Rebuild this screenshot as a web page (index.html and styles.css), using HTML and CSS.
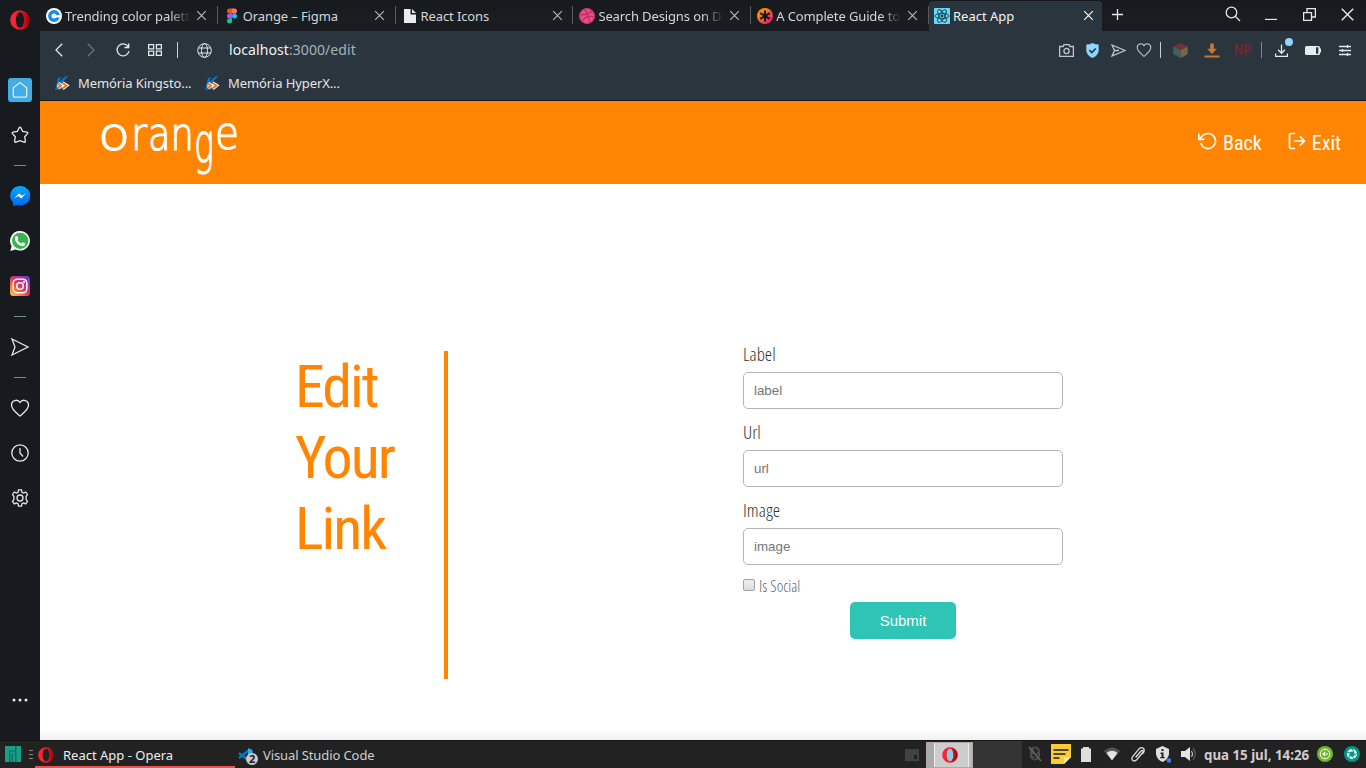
FILE: index.html
```html
<!DOCTYPE html>
<html lang="pt-BR">
<head>
<meta charset="utf-8">
<title>React App</title>
<link rel="stylesheet" href="styles.css">
</head>
<body>
<svg class="defs" width="0" height="0">
  <defs>
    <linearGradient id="operaRed" x1="0" x2="1"><stop offset="0" stop-color="#ff2638"/><stop offset=".5" stop-color="#f01a2b"/><stop offset="1" stop-color="#9c0009"/></linearGradient>
    <linearGradient id="msgBlue" x1="0" y1="0" x2="0" y2="1"><stop offset="0" stop-color="#00aaff"/><stop offset="1" stop-color="#0067ee"/></linearGradient>
    <linearGradient id="insta" x1="0" y1="1" x2=".9" y2="0"><stop offset="0" stop-color="#ffd35a"/><stop offset=".3" stop-color="#f77737"/><stop offset=".55" stop-color="#e1306c"/><stop offset="1" stop-color="#6a3bd0"/></linearGradient>
    <linearGradient id="guide" x1="0" y1="0" x2="1" y2="1"><stop offset=".3" stop-color="#ff8a00"/><stop offset=".75" stop-color="#e52e71"/></linearGradient>
    <symbol id="close" viewBox="0 0 12 12"><path d="M1.3 1.3l9.4 9.4M10.7 1.3l-9.4 9.4"/></symbol>
    <symbol id="send" viewBox="0 0 20 20"><path d="M2 2l16 8-16 8 3-8z"/></symbol>
    <symbol id="heart" viewBox="0 0 20 20"><path d="M10 18C6 14.500 1.500 11.500 1.500 7a4.600 4.600 0 0 1 8.500-2.500A4.600 4.600 0 0 1 18.500 7C18.500 11.500 14 14.500 10 18z"/></symbol>
    <symbol id="opera" viewBox="0 0 20 20"><path fill="url(#operaRed)" fill-rule="evenodd" d="M10 .2a9.800 9.800 0 1 0 0 19.600A9.800 9.800 0 0 0 10 .2zM10 2.300c2.500 0 4.100 3.400 4.100 7.700s-1.600 7.700-4.100 7.700S5.900 14.300 5.900 10 7.500 2.300 10 2.300z"/></symbol>
    <symbol id="kabum" viewBox="0 0 16 16"><path fill="#0877c8" d="M1 15L4 3l3-1-2 5 7-6h2L8 8l5 3-4 3z"/><path d="M4 8.500l3 2-3 2.500M8.500 8l4 2.500-4 3" fill="none" stroke="#fff" stroke-width="3.500"/><path d="M4 8.500l3 2-3 2.500M8.500 8l4 2.500-4 3" fill="none" stroke="#ee6b22" stroke-width="1.700"/></symbol>
  </defs>
</svg>
<div class="desktop">
  <div class="browser">
    <aside class="sidebar">
      <div class="side-logo"><svg width="20" height="20"><use href="#opera"/></svg></div>
      <div class="side-item first"><span class="home"><svg class="line" width="18" height="18" viewBox="0 0 18 18"><path d="M9 1.500L2.300 6.800v7.400q0 2 2 2h9.400q2 0 2-2V6.800z"/></svg></span></div>
      <div class="side-item"><svg class="line round" width="18" height="18" viewBox="0 0 18 18"><path d="M8.200 1.700q.8-1.200 1.600 0L11.700 5.500l4.300.7q1.400.4.500 1.500l-2.800 3.100.7 4.300q0 1.500-1.400 1L9 14.700l-4 1.400q-1.400.5-1.400-1l.7-4.300-2.800-3.100q-.9-1.100.5-1.500l4.300-.7z"/></svg></div>
      <div class="side-rule"></div>
      <div class="side-item"><svg width="20" height="20" viewBox="0 0 20 20"><path fill="url(#msgBlue)" d="M10 0a10 9.700 0 1 1-2.500 19L3 20v-3.300A9.800 9.800 0 0 1 10 0z"/><path fill="#fff" d="M4.200 12.500l4.900-5.200 2.800 2.500 4.200-2.500-4.800 5.300-2.900-2.500z"/></svg></div>
      <div class="side-item"><svg width="20" height="20" viewBox="0 0 20 20"><path fill="#f4f4f4" d="M10.200 0a9.800 9.800 0 1 1-4.600 18.500L.3 20l1.300-5A9.800 9.800 0 0 1 10.200 0z"/><circle cx="10.200" cy="9.800" r="8.100" fill="#35b44a"/><path fill="#fff" d="M7 4.800l1.400 2.900-.9 1.300q1.200 2.600 3.700 3.600l1.200-1.300 2.800 1.300q0 2.400-2.900 2.700Q7 14.700 5 8.800 4.700 5 7 4.800z"/></svg></div>
      <div class="side-item"><svg width="20" height="20" viewBox="0 0 20 20"><rect width="20" height="20" rx="3.500" fill="url(#insta)"/><g fill="none" stroke="#fff" stroke-width="1.500"><rect x="3.200" y="3.200" width="13.600" height="13.600" rx="4"/><circle cx="10" cy="10" r="3.300"/></g><circle cx="14" cy="6" r="1" fill="#fff"/></svg></div>
      <div class="side-rule"></div>
      <div class="side-item"><svg class="line" width="20" height="20"><use href="#send"/></svg></div>
      <div class="side-rule"></div>
      <div class="side-item"><svg class="line" width="20" height="20" viewBox="0 0 20 20"><use href="#heart" width="20" height="20"/></svg></div>
      <div class="side-item"><svg class="line" width="18" height="18" viewBox="0 0 18 18"><circle cx="9" cy="9" r="8.200"/><path d="M9 4v5l3 3.500"/></svg></div>
      <div class="side-item"><svg class="line" width="18" height="18" viewBox="0 0 18 18"><path d="M7.500.8h3l.5 2.400 1.500.8 2.200-1 1.700 2.500-1.300 2v2.900l1.300 2-1.700 2.500-2.200-1-1.500.8-.5 2.400h-3L7 14.700l-1.500-.8-2.200 1-1.700-2.500 1.300-2V7.500l-1.300-2L3.300 3l2.200 1L7 3.200z"/><circle cx="9" cy="9" r="3"/></svg></div>
      <div class="side-item more"><svg width="16" height="4" fill="#e6eaec"><circle cx="2" cy="2" r="1.500"/><circle cx="8" cy="2" r="1.500"/><circle cx="14" cy="2" r="1.500"/></svg></div>
    </aside>
    <div class="window">
      <div class="tabs">
        <div class="tab"><svg width="16" height="16" viewBox="0 0 16 16"><circle cx="8" cy="8" r="8" fill="#fff"/><circle cx="8" cy="8" r="4.200" fill="none" stroke="#128cf5" stroke-width="3.400"/><path fill="#fff" d="M9 7h6v2.500H9z"/></svg><span class="tab-title fade">Trending color palett</span><svg class="x"><use href="#close"/></svg></div>
        <div class="tab"><svg width="16" height="16" viewBox="0 0 16 16"><path fill="#f24e1e" d="M8 .5H5.500a2.500 2.500 0 0 0 0 5H8z"/><path fill="#ff7262" d="M8 .5h2.500a2.500 2.500 0 0 1 0 5H8z"/><path fill="#a259ff" d="M8 5.500H5.500a2.500 2.500 0 0 0 0 5H8z"/><circle cx="10.500" cy="8" r="2.500" fill="#1abcfe"/><path fill="#0acf83" d="M8 10.500H5.500A2.500 2.500 0 1 0 8 13z"/></svg><span class="tab-title">Orange – Figma</span><svg class="x"><use href="#close"/></svg></div>
        <div class="tab"><svg width="16" height="16" viewBox="0 0 16 16"><path fill="#e8ecee" d="M2 1h6.500v5.500H14V15H2zM10 1l4 4h-4z"/></svg><span class="tab-title">React Icons</span><svg class="x"><use href="#close"/></svg></div>
        <div class="tab"><svg width="16" height="16" viewBox="0 0 16 16"><circle cx="8" cy="8" r="7.800" fill="#ea4c89"/><path fill="none" stroke="#b92b64" stroke-width="1.100" d="M5 1c4 4 5 8 6 14M1 7c5 0 9-1 12-4M3 14c2-5 7-7 12-5"/><circle cx="8" cy="8" r="7.300" fill="none" stroke="#c93870"/></svg><span class="tab-title fade">Search Designs on D</span><svg class="x"><use href="#close"/></svg></div>
        <div class="tab"><svg width="16" height="16" viewBox="0 0 16 16"><circle cx="8" cy="8" r="8" fill="url(#guide)"/><path stroke="#151719" stroke-width="2" d="M8 2.500v11M3.200 5.200l9.600 5.600M12.800 5.200l-9.600 5.600"/></svg><span class="tab-title fade">A Complete Guide to</span><svg class="x"><use href="#close"/></svg></div>
        <div class="tab active"><svg width="16" height="16" viewBox="0 0 16 16"><rect width="16" height="16" rx="1" fill="#61dafb"/><g fill="none" stroke="#1f3c49" stroke-width=".9"><ellipse cx="8" cy="8" rx="7" ry="2.700"/><ellipse cx="8" cy="8" rx="7" ry="2.700" transform="rotate(60 8 8)"/><ellipse cx="8" cy="8" rx="7" ry="2.700" transform="rotate(120 8 8)"/></g><circle cx="8" cy="8" r="1.400" fill="#1f3c49"/></svg><span class="tab-title">React App</span><svg class="x"><use href="#close"/></svg></div>
        <svg class="plus line" width="11" height="11" viewBox="0 0 11 11"><path d="M5.500 0v11M0 5.500h11"/></svg>
        <div class="controls">
          <span><svg class="line" width="16" height="16" viewBox="0 0 16 16"><circle cx="6.500" cy="6.500" r="5.300"/><path d="M10.500 10.500l4.500 4.500"/></svg></span>
          <span><svg class="line" width="12" height="12" viewBox="0 0 12 12"><path d="M0 11.500h12"/></svg></span>
          <span><svg class="line" width="13" height="13" viewBox="0 0 13 13"><path d="M.6 4.600h7.900v7.900H.6zM4 4V.6h8.400v8.400H9"/></svg></span>
          <span><svg class="line" width="13" height="13" viewBox="0 0 12 12"><path d="M.7.7l10.600 10.600M11.300.7L.7 11.300"/></svg></span>
        </div>
      </div>
      <div class="toolbar">
        <span class="nav-cell"><svg class="line" width="8" height="14" viewBox="0 0 8 14"><path d="M7.200.7L1 7l6.200 6.300"/></svg></span>
        <span class="nav-cell dim"><svg class="line" width="8" height="14" viewBox="0 0 8 14"><path d="M.8.7L7 7 .8 13.300"/></svg></span>
        <span class="nav-cell"><svg class="line" width="14" height="14" viewBox="0 0 14 14"><path d="M12.200 3.700A6 6 0 1 0 13 8M12.700.5v4H8.500"/></svg></span>
        <span class="nav-cell"><svg class="line" width="14" height="12" viewBox="0 0 14 12"><path d="M.6.6h5v4.200h-5zM8.400.6h5v4.200h-5zM.6 7.200h5v4.200h-5zM8.400 7.200h5v4.200h-5z"/></svg></span>
        <span class="sep left"></span>
        <span class="nav-cell"><svg class="line globe" width="15" height="15" viewBox="0 0 15 15"><circle cx="7.500" cy="7.500" r="6.800"/><ellipse cx="7.500" cy="7.500" rx="3" ry="6.800"/><path d="M1.500 5h12M1.500 10h12"/></svg></span>
        <span class="url">localhost<span>:3000/edit</span></span>
        <div class="tools">
          <span class="c26"><svg class="line soft" width="15" height="13" viewBox="0 0 15 13"><path d="M.6 2.500H4L5 .6h5l1 1.900h3.400v9.900H.6z"/><circle cx="7.500" cy="7" r="2.600"/></svg></span>
          <span class="c26"><svg width="13" height="15" viewBox="0 0 13 15"><path fill="#8ed6ff" d="M6.500 0Q9 1.500 12.700 1.500V8Q12 12.500 6.500 15 1 12.500.3 8V1.500Q4 1.500 6.500 0z"/><path d="M3.300 7l2.500 2.500 4-4" fill="none" stroke="#26323a" stroke-width="1.600"/></svg></span>
          <span class="c26"><svg class="line soft" width="15" height="13" viewBox="0 0 15 13"><path d="M1 1l13 5.500L1 12l2.500-5.500zM3.500 6.500H8"/></svg></span>
          <span class="c26"><svg class="line soft" width="16" height="16"><use href="#heart"/></svg></span>
          <span class="sep"></span>
          <span class="c31"><svg width="15" height="15" viewBox="0 0 15 15"><path fill="#74303c" d="M7.500 0l7.200 3.500-7.200 3.700L.3 3.500z"/><path fill="#39675f" d="M.3 3.500l7.200 3.700V15L.3 11.300z"/><path fill="#756748" d="M14.700 3.500L7.500 7.200V15l7.200-3.700z"/></svg></span>
          <span class="c31"><svg width="16" height="15" viewBox="0 0 16 15"><path fill="#cb7828" d="M6.200.5h3.600v5.300h3L8 11 3.200 5.800h3zM.5 12.500h15v2H.5z"/></svg></span>
          <span class="c31 np">NP</span>
          <span class="sep faint"></span>
          <span class="c32 download"><svg class="line" width="13" height="13" viewBox="0 0 13 13"><path d="M6.500.5v8.700M3 5.800l3.500 3.500L10 5.800M.6 9.500v2.900h11.800V9.500"/></svg><i class="dot"></i></span>
          <span class="c32"><svg width="16" height="9" viewBox="0 0 16 9"><rect width="15" height="9" rx="1.500" fill="#e6ebee"/><path fill="#2b353e" d="M11 1.300h2.300v6.400H11z"/><path fill="#e6ebee" d="M14.500 2.500H16v4h-1.500z"/></svg></span>
          <span class="c32"><svg class="line" width="12" height="11" viewBox="0 0 12 11"><path d="M0 1.500h12M0 5.500h12M0 9.500h12M8.500 0v3M3.500 4v3M8.500 8v3"/></svg></span>
        </div>
      </div>
      <div class="bookmarks">
        <a><svg width="16" height="16"><use href="#kabum"/></svg>Memória Kingsto...</a>
        <a><svg width="16" height="16"><use href="#kabum"/></svg>Memória HyperX...</a>
      </div>
      <div class="page">
        <header class="header">
          <svg class="brand" width="140" height="70" viewBox="0 0 140 70"><text y="37"><tspan x="-2" textLength="32" lengthAdjust="spacingAndGlyphs">o</tspan><tspan x="31" textLength="16" lengthAdjust="spacingAndGlyphs">r</tspan><tspan x="48" textLength="46" lengthAdjust="spacingAndGlyphs">an</tspan><tspan class="tail" x="94" y="49" textLength="20" lengthAdjust="spacingAndGlyphs">g</tspan><tspan x="115" y="36" textLength="24" lengthAdjust="spacingAndGlyphs">e</tspan></text></svg>
          <nav class="menu">
            <a><svg class="line feather" width="20" height="20" viewBox="0 0 24 24"><path d="M1 4v6h6"/><path d="M3.510 15a9 9 0 1 0 2.130-9.360L1 10"/></svg>Back</a>
            <a><svg class="line feather" width="20" height="20" viewBox="0 0 24 24"><path d="M9 21H5a2 2 0 0 1-2-2V5a2 2 0 0 1 2-2h4M16 17l5-5-5-5M21 12H9"/></svg>Exit</a>
          </nav>
        </header>
        <main class="content">
          <h1>Edit<br>Your<br>Link</h1>
          <form class="form">
            <label for="label">Label</label>
            <input class="field" id="label" type="text" placeholder="label">
            <label for="url">Url</label>
            <input class="field" id="url" type="text" placeholder="url">
            <label for="image">Image</label>
            <input class="field" id="image" type="text" placeholder="image">
            <div class="check"><input type="checkbox" id="social"><label for="social">Is Social</label></div>
            <button type="button">Submit</button>
          </form>
        </main>
      </div>
    </div>
  </div>
  <footer class="taskbar">
    <svg class="manjaro" width="16" height="16" viewBox="0 0 16 16"><path fill="#16a085" d="M0 0h16v16H0z"/><path d="M4.700 16V5h6.100M10.800 0v16M7.200 7.500V16" fill="none" stroke="#125b4c" stroke-width="1"/></svg>
    <svg class="grip" width="4" height="10" viewBox="0 0 4 10"><path stroke="#888" d="M0 .5h4M0 4.500h4M0 8.500h4"/></svg>
    <div class="task current"><svg width="16" height="16" viewBox="0 0 20 20"><use href="#opera" width="20" height="20"/></svg>React App - Opera</div>
    <div class="task"><span class="code"><svg width="15" height="15" viewBox="0 0 15 15"><path d="M1 5l9.500 7.500M1 10l9.500-7.500" stroke="#0879bd" stroke-width="2.300"/><path fill="#2aa9f3" d="M10 0l4.500 2v11L10 15z"/></svg><b>2</b></span>Visual Studio Code</div>
    <div class="tray">
      <span class="pager"><i></i></span>
      <span class="thumb"><svg width="16" height="16"><circle cx="8" cy="8" r="6" fill="#8ec9e3"/><use href="#opera"/></svg></span>
      <span class="blank"></span>
      <span class="t26"><svg width="14" height="18" viewBox="0 0 14 18" fill="none" stroke="#666" stroke-width="1.500"><rect x="2" y="1.500" width="10" height="14" rx="5" fill="#4c4c4c" stroke="none"/><path stroke="#222" d="M4.500 6l5 5L7 13V4l2.500 2-5 5"/><path d="M1 2l12 14"/></svg></span>
      <span class="t26"><svg width="20" height="20" viewBox="0 0 20 20"><path fill="#fdcb32" d="M0 0h20v13l-7 7H0z"/><path fill="#ffe89a" d="M13 13h7l-7 7z"/><path d="M2.500 6h15M2.500 10h12M2.500 14h6" stroke="#4c4630" stroke-width="2"/></svg></span>
      <span class="t26"><svg width="10" height="15" fill="#dedede"><path d="M0 1.500h2V0h6v1.500h2V15H0z"/></svg></span>
      <span class="t26"><svg width="16" height="14" viewBox="0 0 16 14"><path fill="#555" d="M0 4q8-7 16 0l-8 9.500z"/><path fill="#e2e2e2" d="M2.500 6q5.500-4.500 11 0L8 13.500z"/></svg></span>
      <span class="t26"><svg width="16" height="16" viewBox="0 0 16 16" fill="none" stroke="#ddd" stroke-width="1.300" stroke-linecap="round"><path d="M6 11l5-6q1-1 1.700-.3t0 1.800l-6 7.300q-2 2-3.800.7t-.4-3.600l6.500-8q2-2 4-.8t.7 4.200l-1 1.300"/></svg></span>
      <span class="t26"><svg width="16" height="17" viewBox="0 0 16 17"><path fill="#e0e0e0" d="M7.500 0L14 3v5q-.5 5-6.500 8Q1.500 13 1 8V3z"/><path fill="#222" d="M6.500 3h2v2h-2zM5.500 6.500h3V11h1.200v1.300H5.300V11h1.200V8h-1z"/><circle cx="14" cy="14.500" r="2.200" fill="#3584e4"/></svg></span>
      <span class="t26 sound"><svg width="16" height="14" viewBox="0 0 16 14" fill="none"><path fill="#e5e5e5" d="M0 4h4l5-4v14l-5-4H0z"/><path d="M10.500 4q2 3 0 6" stroke="#bbb" stroke-width="1.200"/><path d="M12 1q4.500 6 0 12" stroke="#555" stroke-width="1.500"/></svg></span>
      <time>qua 15 jul, 14:26</time>
      <svg class="green" width="16" height="16" viewBox="0 0 16 16"><circle cx="8" cy="8" r="8" fill="#73b52d"/><circle cx="8" cy="8" r="4.800" fill="none" stroke="#fff"/><path stroke="#fff" stroke-width="1.200" fill="none" d="M11 8H6M8 6L6 8l2 2"/></svg>
      <svg class="shutter" width="16" height="16" viewBox="0 0 16 16"><circle cx="8" cy="8" r="8" fill="#009688"/><circle cx="8" cy="8" r="3.800" fill="none" stroke="#fff" stroke-width="2.400"/><path d="M8 2l2 4.500M14 7l-4 2M11 14L8 10M4 13l2-4M2 6l4 1" stroke="#009688" stroke-width="1"/></svg>
    </div>
  </footer>
</div>
</body>
</html>
```
FILE: styles.css
```css
* { box-sizing: border-box; }
body { margin: 0; font-family: "Noto Sans", sans-serif; font-size: 13px; color: #e3e7e9; overflow: hidden; }
.defs { position: absolute; }
svg { flex: none; display: block; }
.line { fill: none; stroke: #e3e8ea; stroke-width: 1.3; }
.soft { stroke: #c0c8cc; }
.globe { stroke-width: 1; }
.desktop { width: 1366px; height: 768px; display: flex; flex-direction: column; background: #171b1f; }
.browser { display: flex; height: 740px; }
.sidebar { width: 40px; display: flex; flex-direction: column; align-items: center; background: #171b1f; padding-bottom: 18px; }
.side-logo { height: 40px; display: flex; align-items: center; }
.side-item { height: 45px; display: flex; align-items: center; justify-content: center; }
.side-item.first { margin-top: 27px; }
.side-item.more { margin-top: auto; }
.home { width: 24px; height: 24px; border-radius: 3px; background: #42ade5; display: flex; align-items: center; justify-content: center; }
.side-rule { height: 16px; width: 12px; display: flex; align-items: center; }
.side-rule::after { content: ""; width: 12px; height: 1px; background: #7c8a91; }
.window { width: 1326px; display: flex; flex-direction: column; background: #2b353e; }
.tabs { height: 31px; display: flex; background: linear-gradient(#15191d, #1b1e20 60%, #181b1f); }
.tab { width: 177.8px; height: 31px; display: flex; align-items: center; padding-left: 6px; }
.tab:not(.active) { border-right: 1px solid; border-image: linear-gradient(transparent 7px, #555b5f 7px, #555b5f 23px, transparent 23px) 1; }
.tab-title { width: 125px; margin-left: 3px; white-space: nowrap; color: #d3d6d8; letter-spacing: -.12px; }
.fade { -webkit-mask-image: linear-gradient(90deg, #000 84%, transparent); mask-image: linear-gradient(90deg, #000 84%, transparent); }
.x { width: 11px; height: 11px; margin-left: 6px; fill: none; stroke: #b7bdc0; stroke-width: 1.2; }
.tab.active { width: 173px; height: 30px; margin-top: 1px; padding-left: 5px; padding-bottom: 1px; background: #2b353e; border-radius: 3px 3px 0 0; }
.active .tab-title { width: 124px; color: #f2f4f5; letter-spacing: 0; }
.active .x { stroke: #fff; }
.plus { margin: 9px 0 0 10px; }
.controls { margin-left: auto; display: flex; }
.controls span { width: 38px; height: 28px; display: flex; align-items: center; justify-content: center; }
.toolbar { height: 38px; display: flex; align-items: center; padding: 0 5px 0 3px; }
.nav-cell { width: 32px; display: flex; justify-content: center; }
.dim { opacity: .35; }
.sep { width: 1px; height: 16px; background: #c9cfd2; margin: 0 4px 0 3px; }
.sep.left { margin: 0 10px 0 6px; }
.sep.faint { background: #7b858b; margin: 0 3px; }
.url { margin: -2px 0 0 9px; font-size: 14px; letter-spacing: .08px; color: #f0f3f5; }
.url span { color: #a6b3bb; }
.tools { margin-left: auto; display: flex; align-items: center; }
.c26, .c31, .c32 { display: flex; justify-content: center; align-items: center; width: 26px; }
.c31 { width: 31px; }
.c32 { width: 32px; }
.np { font: 500 15px "Roboto Condensed", Roboto, sans-serif; font-stretch: 75%; color: #74272f; }
.download { position: relative; }
.dot { position: absolute; left: 20px; top: -6px; width: 8px; height: 8px; border-radius: 50%; background: #8ed6ff; }
.bookmarks { height: 32px; padding: 0 0 4px 14px; display: flex; align-items: center; border-bottom: 1px solid #171b1f; letter-spacing: -.1px; }
.bookmarks a { width: 150px; display: flex; align-items: center; gap: 8px; white-space: nowrap; }
.page { flex: 1; background: #fff; display: flex; flex-direction: column; }
.header { height: 83px; background: #ff8502; display: flex; justify-content: space-between; padding: 12px 25px 0 60px; }
.brand { overflow: visible; fill: #fff; stroke: #fff; stroke-width: 1.2; font: 200 46px "DejaVu Sans Light", "DejaVu Sans", sans-serif; }
.tail { font-size: 56px; }
.menu { display: flex; gap: 25px; height: 60px; align-items: center; font: 20px "Roboto Condensed", Roboto, sans-serif; font-stretch: 75%; color: #fff; }
.menu a { display: flex; align-items: center; gap: 5px; }
.feather { stroke: #fff; stroke-width: 2; stroke-linecap: round; stroke-linejoin: round; margin-top: -4px; }
.content { flex: 1; display: flex; padding: 158px 0 0 255px; background: linear-gradient(transparent 546px, #f0f0f0 556px); }
h1 { width: 153px; height: 328px; margin: 9px 0 0; border-right: 4px solid #ff8502; color: #ff8502; font: 400 60px/71px "Roboto Condensed", Roboto, sans-serif; font-stretch: 75%; letter-spacing: -2px; }
.form { width: 320px; margin-left: 295px; display: flex; flex-direction: column; font-family: "Open Sans Condensed Light", "Open Sans", sans-serif; font-weight: 300; font-stretch: 75%; color: #333; }
.form > label { height: 30px; font-size: 18.72px; line-height: 23px; }
.field { width: 320px; height: 37px; margin: 0 0 11px; border: 1px solid #b5b5b5; border-radius: 5px; padding: 0 10px; background: #fff; font: 13.333px "Liberation Sans", sans-serif; }
.field::placeholder { color: #757575; }
.check { display: flex; align-items: center; height: 20px; gap: 4px; font-size: 16px; color: #666; }
.check input { appearance: none; width: 12px; height: 12px; margin: 0 0 2px; border: 1px solid #a2a2a2; border-radius: 2px; background: linear-gradient(#eee, #dcdcdc); }
button { align-self: center; width: 106px; height: 37px; margin-top: 6px; border: 0; border-radius: 5px; background: #2ec4b6; color: #fff; font: 15px "Liberation Sans", sans-serif; }
.taskbar { height: 28px; display: flex; align-items: center; background: #222; border-top: 1px solid #171717; }
.manjaro { margin: 0 0 2px 5px; }
.grip { margin: 0 2px 0 8px; }
.task { width: 200px; height: 27px; display: flex; align-items: center; padding: 1px 0 0 3px; gap: 9px; color: #cfcfcf; letter-spacing: -.1px; }
.task.current { border-bottom: 2px solid #ef5350; color: #eee; padding-top: 2px; letter-spacing: 0; }
.code { width: 16px; position: relative; }
.code b { position: absolute; left: 8px; top: 5px; width: 12px; height: 12px; border-radius: 50%; background: #d0c9cb; color: #222; font-size: 11px; line-height: 12px; text-align: center; }
.tray { margin-left: auto; display: flex; align-items: center; padding-right: 6px; }
.pager { width: 14px; height: 12px; background: #424242; margin-right: 7px; display: flex; align-items: flex-end; justify-content: flex-end; }
.pager i { width: 3px; height: 4px; margin: 2px; background: #202020; }
.thumb { width: 47px; height: 26px; border: 1px solid #b0a5a5; background: linear-gradient(90deg, #aaa 7px, #eee 7px 8px, #ccc 8px 41px, #eee 41px 42px, #bbb 42px); display: flex; align-items: center; justify-content: center; }
.blank { width: 49px; height: 27px; background: #343434; }
.t26 { width: 25.7px; display: flex; justify-content: center; padding-bottom: 1px; }
time { width: 107px; margin-left: 2px; font-size: 13.3px; font-weight: 700; color: #d3caca; white-space: nowrap; }
.green { margin: 0 11px 2px 6px; }
.shutter { margin-bottom: 2px; }
```
